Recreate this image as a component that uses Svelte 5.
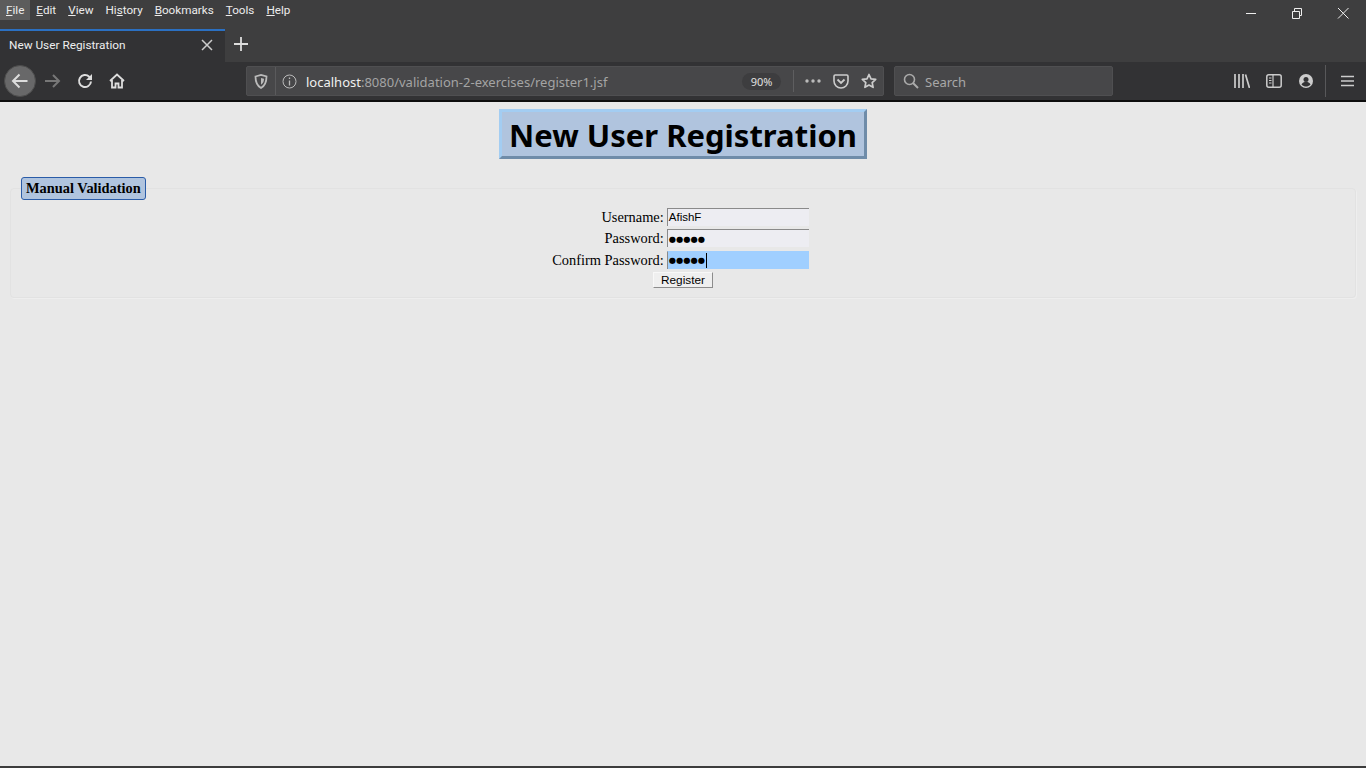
<script>
	// Firefox window with the JSF registration page inside
	const menus = [
		{ key: 'F', rest: 'ile', pre: '', active: true },
		{ key: 'E', rest: 'dit', pre: '' },
		{ key: 'V', rest: 'iew', pre: '' },
		{ key: 's', rest: 'tory', pre: 'Hi' },
		{ key: 'B', rest: 'ookmarks', pre: '' },
		{ key: 'T', rest: 'ools', pre: '' },
		{ key: 'H', rest: 'elp', pre: '' }
	];
	const rows = [
		{ label: 'Username:', value: 'AfishF', text: true },
		{ label: 'Password:', value: '●●●●●' },
		{ label: 'Confirm Password:', value: '●●●●●', focused: true }
	];
</script>

<div class="window">
	<div class="chrome">
		<div class="menubar">
			<div class="menus">
				{#each menus as m}
					<span class="menu" class:active={m.active}>{m.pre}<u>{m.key}</u>{m.rest}</span>
				{/each}
			</div>
			<div class="winctl">
				<svg width="46" height="28" viewBox="0 0 46 28"><path d="M18 13.500h10" stroke="#eee" fill="none"/></svg>
				<svg width="46" height="28" viewBox="0 0 46 28"><path d="M18.500 11.500h7v7h-7zM20.500 11V8.500h7v7H26" stroke="#eee" fill="none"/></svg>
				<svg width="46" height="28" viewBox="0 0 46 28"><path d="M18 8l10.500 10.500M28.500 8L18 18.500" stroke="#eee" fill="none"/></svg>
			</div>
		</div>
		<div class="tabbar">
			<div class="tab">
				<span class="tab-title">New User Registration</span>
				<svg class="tab-close" width="12" height="12" viewBox="0 0 12 12"><path d="M1 1l10 10M11 1L1 11" stroke="#ccc" stroke-width="1.500" fill="none"/></svg>
			</div>
			<svg class="newtab" width="14" height="14" viewBox="0 0 14 14"><path d="M7 0v14M0 7h14" stroke="#ddd" stroke-width="1.800" fill="none"/></svg>
		</div>
		<div class="toolbar">
			<div class="nav">
				<div class="back">
					<svg width="18" height="16" viewBox="0 0 18 16"><path d="M16.500 8H2M8.500 1.500L2 8l6.500 6.500" stroke="#ddd" stroke-width="2" fill="none"/></svg>
				</div>
				<div class="navbtn">
					<svg width="18" height="16" viewBox="0 0 18 16"><path d="M1 8h14M9 2l6 6-6 6" stroke="#777" stroke-width="2" fill="none"/></svg>
				</div>
				<div class="navbtn">
					<svg width="16" height="16" viewBox="0 0 16 16"><path d="M14 8.500a6 6 0 1 1-1.800-4.800L14 5.500" stroke="#ddd" stroke-width="2" fill="none"/><path d="M15 1v6H9z" fill="#ddd"/></svg>
				</div>
				<div class="navbtn">
					<svg width="16" height="16" viewBox="0 0 16 16"><path d="M1 8l7-6.500L15 8M3 7v7.500h3.500v-4h3v4H13V7" stroke="#ddd" stroke-width="1.800" fill="none"/></svg>
				</div>
			</div>
			<div class="urlbar">
				<div class="shield">
					<svg width="14" height="15" viewBox="0 0 14 15"><path d="M1.500 2.500L7 1l5.500 1.500c0 5-1 9-5.500 11.500C2.500 11.500 1.500 7.500 1.500 2.500z" stroke="#bbb" stroke-width="1.800" fill="none"/><path d="M7 4l3 .8c0 2.500-.8 4.500-3 6z" fill="#bbb"/></svg>
				</div>
				<svg class="info" width="15" height="15" viewBox="0 0 15 15"><circle cx="7.500" cy="7.500" r="6.500" stroke="#bbb" fill="none"/><path d="M7.500 6.500v5M7.500 3.500v1.500" stroke="#bbb" stroke-width="1.300" fill="none"/></svg>
				<span class="url"><b>localhost</b>:8080/validation-2-exercises/register1.jsf</span>
				<span class="zoom">90%</span>
				<i class="url-sep"></i>
				<svg class="more" width="16" height="4" viewBox="0 0 16 4"><circle cx="2" cy="2" r="1.700" fill="#bbb"/><circle cx="8" cy="2" r="1.700" fill="#bbb"/><circle cx="14" cy="2" r="1.700" fill="#bbb"/></svg>
				<svg class="pocket" width="16" height="15" viewBox="0 0 16 15"><path d="M1 2.200C1 1.500 1.500 1 2.200 1h11.600c.7 0 1.200.5 1.200 1.200V7a7 7 0 0 1-14 0z" stroke="#ccc" stroke-width="1.600" fill="none"/><path d="M4.500 5.500L8 9l3.500-3.500" stroke="#ccc" stroke-width="1.800" fill="none"/></svg>
				<svg class="star" width="16" height="16" viewBox="0 0 16 16"><path d="M8 1.500l2 4.300 4.700.6-3.500 3.200.9 4.700L8 12l-4.100 2.300.9-4.700L1.300 6.400 6 5.800z" stroke="#ccc" stroke-width="1.700" stroke-linejoin="round" fill="none"/></svg>
			</div>
			<div class="searchbar">
				<svg width="16" height="16" viewBox="0 0 16 16"><circle cx="6.500" cy="6.500" r="5" stroke="#aaa" stroke-width="1.600" fill="none"/><path d="M10 10l5 5" stroke="#aaa" stroke-width="2" fill="none"/></svg>
				<span>Search</span>
			</div>
			<div class="tools">
				<svg width="16" height="14" viewBox="0 0 16 14"><path d="M1 0v14M5 0v14M9 0v14M11.500 .5l4 13.500" stroke="#ccc" stroke-width="1.700" fill="none"/></svg>
				<svg width="16" height="14" viewBox="0 0 16 14"><rect x=".8" y=".8" width="14.400" height="12.400" rx="2" stroke="#ccc" stroke-width="1.500" fill="none"/><path d="M7 1v12M3 4h2.500M3 6.500h2.500M3 9h2.500" stroke="#ccc" stroke-width="1.200" fill="none"/></svg>
				<svg class="account" width="14" height="14" viewBox="0 0 14 14"><circle cx="7" cy="7" r="7" fill="#ccc"/><circle cx="7" cy="5.500" r="2.500" fill="#323234"/><path d="M2.500 10.500c1-2 2.500-2.500 4.500-2.500s3.500 .5 4.500 2.500C10 12 8.500 12.500 7 12.500s-3-.5-4.500-2z" fill="#323234"/></svg>
				<i class="tool-sep"></i>
				<svg class="burger" width="13" height="12" viewBox="0 0 13 12"><path d="M0 1.500h13M0 6h13M0 10.500h13" stroke="#ccc" stroke-width="1.700" fill="none"/></svg>
			</div>
		</div>
	</div>

	<main class="page">
		<div class="title-wrap"><h1>New User Registration</h1></div>
		<fieldset>
			<legend>Manual Validation</legend>
			<table>
				<tbody>
					{#each rows as r}
						<tr>
							<td class="lbl">{r.label}</td>
							<td class="field">
								<div class="input" class:focused={r.focused} class:plain={r.text}>
									{r.value}{#if r.focused}<span class="caret"></span>{/if}
								</div>
							</td>
						</tr>
					{/each}
				</tbody>
			</table>
			<div class="actions"><button>Register</button></div>
		</fieldset>
	</main>
</div>

<style>
	:global(body) {
		margin: 0;
		background: #e8e8e8;
	}

	.window {
		height: 768px;
		display: flex;
		flex-direction: column;
		overflow: hidden;
		border-bottom: 2px solid #3c3c3c;
		box-sizing: border-box;
	}

	.chrome {
		font-family: "Noto Sans", sans-serif;
		color: #eee;
		background: #3e3e3f;
		border-bottom: 2px solid #0e0e0e;
	}

	.menubar {
		height: 29px;
		display: flex;
		justify-content: space-between;
		align-items: flex-start;
	}

	.menus {
		display: flex;
		font-family: Roboto, sans-serif;
		font-size: 11.700px;
	}

	.menu {
		padding: 0 6px;
		height: 20px;
		line-height: 20px;
		color: #ececec;
	}

	.menu.active {
		background: #5c5c5c;
	}

	.winctl {
		display: flex;
		margin-right: 0;
	}

	.tabbar {
		height: 33px;
		display: flex;
		align-items: center;
	}

	.tab {
		width: 225px;
		height: 33px;
		box-sizing: border-box;
		background: #323234;
		border-top: 2px solid #2b70c2;
		display: flex;
		align-items: center;
		justify-content: space-between;
		padding: 0 12px 3px 9px;
		font-family: Roboto, sans-serif;
		font-size: 11.800px;
	}

	.newtab {
		margin-left: 9px;
		margin-bottom: 4px;
	}

	.toolbar {
		height: 38px;
		background: #323234;
		display: flex;
		align-items: center;
	}

	.nav {
		display: flex;
		align-items: center;
		width: 246px;
		padding-left: 4px;
		box-sizing: border-box;
		gap: 0;
	}

	.back {
		width: 32px;
		height: 32px;
		border-radius: 50%;
		background: #686869;
		border: 1px solid #4c4c4c;
		box-sizing: border-box;
		display: flex;
		align-items: center;
		justify-content: center;
		margin-right: 1px;
	}

	.navbtn {
		width: 32px;
		display: flex;
		justify-content: center;
	}

	.urlbar {
		width: 638px;
		height: 30px;
		box-sizing: border-box;
		background: #474749;
		border: 1px solid #4f4f51;
		border-radius: 2px;
		display: flex;
		align-items: center;
		font-size: 13px;
		color: #a4a4a4;
	}

	.shield {
		width: 29px;
		height: 100%;
		display: flex;
		align-items: center;
		justify-content: center;
		border-right: 1px solid #5a5a5c;
		box-sizing: border-box;
	}

	.info {
		margin: 0 9px 0 6px;
	}

	.url {
		flex: 1;
		white-space: nowrap;
		padding-top: 1px;
	}

	.url b {
		font-weight: 400;
		color: #f0f0f0;
	}

	.zoom {
		width: 39px;
		height: 17px;
		line-height: 17px;
		text-align: center;
		border-radius: 9px;
		background: #3d3d3f;
		color: #e0e0e0;
		font-size: 11px;
		margin-right: 12px;
	}

	.url-sep {
		width: 1px;
		height: 22px;
		background: #5e5e60;
		margin-right: 11px;
	}

	.more {
		margin-right: 12px;
	}

	.pocket {
		margin-right: 12px;
	}

	.star {
		margin-right: 6px;
	}

	.searchbar {
		width: 219px;
		height: 30px;
		margin-left: 10px;
		box-sizing: border-box;
		background: #474749;
		border: 1px solid #4f4f51;
		border-radius: 2px;
		display: flex;
		align-items: center;
		gap: 6px;
		padding-left: 8px;
		font-size: 13px;
		color: #a8a8a8;
	}

	.searchbar span {
		padding-top: 1px;
	}

	.tools {
		display: flex;
		align-items: center;
		margin-left: 121px;
		gap: 16px;
	}

	.account {
		margin-left: 1px;
	}

	.tool-sep {
		width: 1px;
		height: 32px;
		background: #58585a;
		margin-left: -4px;
	}

	.burger {
		margin-left: -1px;
	}

	.page {
		flex: 1;
		background: #e8e8e8;
		padding: 7px 10px 0;
	}

	.title-wrap {
		display: flex;
		justify-content: center;
	}

	h1 {
		margin: 0;
		height: 50px;
		line-height: 47px;
		box-sizing: border-box;
		padding: 0 7px;
		font-family: "Noto Sans", sans-serif;
		font-size: 31px;
		font-weight: 700;
		color: #000;
		background: #b0c4de;
		border: 3px solid;
		border-color: #a3cdf2 #6f8ca9 #6f8ca9 #a3cdf2;
		white-space: nowrap;
	}

	fieldset {
		margin: 18px 0 0;
		padding: 0;
		height: 121px;
		box-sizing: border-box;
		border: 1px solid #e2e2e2;
		border-radius: 4px;
		box-shadow: 1px 1px 0 #eeeeee;
		font-family: "Liberation Serif", serif;
		font-size: 14.400px;
		min-width: 0;
	}

	legend {
		margin-left: 10px;
		padding: 0 4px;
		height: 23px;
		line-height: 21px;
		box-sizing: border-box;
		background: #b0c4de;
		border: 1px solid #2a5ca8;
		border-radius: 3px;
		font-weight: 700;
		font-size: 14.400px;
		color: #000;
	}

	table {
		margin: 6px auto 0;
		border-collapse: collapse;
	}

	td {
		padding: 0;
		height: 21.500px;
		box-sizing: border-box;
	}

	.field {
		padding-right: 5px;
	}

	.lbl {
		text-align: right;
		padding: 1px 3px 0 0;
		color: #000;
		white-space: nowrap;
	}

	.input {
		width: 142px;
		height: 18px;
		line-height: 18px;
		box-sizing: border-box;
		background: #ededf2;
		border-top: 1px solid #8a8a8a;
		border-left: 1px solid #8a8a8a;
		padding-left: 1px;
		font-family: "DejaVu Sans", sans-serif;
		font-size: 8.300px;
		color: #000;
		display: flex;
		align-items: center;
	}

	.input.plain {
		font-family: "Liberation Sans", sans-serif;
		font-size: 11.500px;
	}

	.input.focused {
		background: #a0cfff;
		border-top-color: #a0cfff;
	}

	.caret {
		width: 1px;
		height: 15px;
		background: #000;
		margin-left: 1px;
	}

	.actions {
		display: flex;
		justify-content: center;
		margin-top: 1px;
	}

	button {
		width: 60px;
		height: 16px;
		padding: 0;
		background: #efefef;
		border: 1px solid;
		border-color: #f8f8f8 #8c8c8c #8c8c8c #f8f8f8;
		font-family: "Liberation Sans", sans-serif;
		font-size: 11.800px;
		line-height: 14px;
		color: #000;
	}
</style>
